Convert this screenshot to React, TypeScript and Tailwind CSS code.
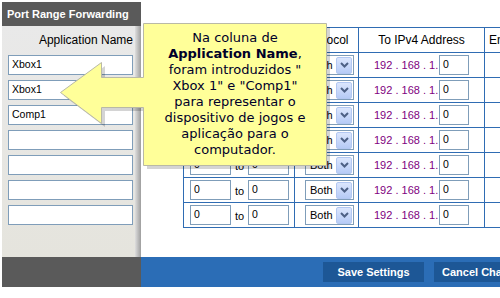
import React from "react";

function Field({ value, w }: { value: string; w: string }) {
  return (
    <div
      className={`${w} h-[20px] shrink-0 border border-[#7f9db9] bg-white flex items-center pl-[3px] pb-[1px] text-[10.5px] text-black`}
    >
      {value}
    </div>
  );
}

function Select() {
  return (
    <div className="w-[49px] h-[20px] shrink-0 border border-[#7f9db9] bg-white flex items-center justify-between">
      <span className="pl-[4px] text-[11px] text-black">Both</span>
      <div className="w-[16px] h-[17px] mr-[1px] rounded-[2px] border border-[#b3c8f2] bg-linear-to-b from-[#dbe6fd] to-[#b6cbf6] flex items-center justify-center">
        <svg width="9" height="6" viewBox="0 0 9 6">
          <path d="M1 1 L4.5 4.5 L8 1" fill="none" stroke="#4d6185" strokeWidth="2" />
        </svg>
      </div>
    </div>
  );
}

export default function App() {
  const sideValues = ["Xbox1", "Xbox1", "Comp1", "", "", "", ""];
  const rows = [0, 1, 2, 3, 4, 5, 6];
  return (
    <div className="relative w-[500px] h-[298px] overflow-hidden bg-white flex flex-col font-['Liberation_Sans',Arial,sans-serif]">
      <div className="flex h-[257px]">
        <aside className="ml-[2px] mt-[2px] w-[139px] shrink-0 flex flex-col">
          <div className="h-[24px] bg-[#5a5a5a] text-white font-bold text-[11px] leading-[24px] pl-[5px] whitespace-nowrap">
            Port Range Forwarding
          </div>
          <div className="flex-1 flex bg-linear-to-b from-[#e9e9e9] to-[#e5e4dd]">
            <div className="flex-1 flex flex-col pl-[6px] pr-[2px] pt-[6px]">
              <div className="h-[16px] leading-[16px] text-[12px] text-right text-black whitespace-nowrap">
                Application Name
              </div>
              <div className="mt-[7px] flex flex-col gap-[5px]">
                {sideValues.map((v, i) => (
                  <Field key={i} value={v} w="w-full" />
                ))}
              </div>
            </div>
            <div className="w-[6px] bg-linear-to-r from-[#dedede] to-[#9e9e9e]" />
          </div>
        </aside>
        <main className="flex-1 min-w-0 overflow-hidden pt-[27px] pl-[42px]">
          <div className="w-max border-t border-l border-[#2f6cb3] text-black">
            <div className="flex h-[25px] border-b border-[#2f6cb3] text-[12px]">
              <div className="w-[111px] border-r border-[#2f6cb3] flex items-center justify-center whitespace-nowrap">
                Start ~ End Port
              </div>
              <div className="w-[64px] border-r border-[#2f6cb3] flex items-center justify-center">
                Protocol
              </div>
              <div className="w-[126px] border-r border-[#2f6cb3] flex items-center justify-center whitespace-nowrap">
                To IPv4 Address
              </div>
              <div className="w-[100px] border-r border-[#2f6cb3] flex items-center pl-[4px]">
                Enabled
              </div>
            </div>
            {rows.map((r) => (
              <div key={r} className="flex h-[25px] border-b border-[#2f6cb3]">
                <div className="w-[111px] border-r border-[#2f6cb3] flex items-center pl-[6px]">
                  <Field value="0" w="w-[41px]" />
                  <span className="w-[17px] text-center text-[11px] self-end pb-[3px]">to</span>
                  <Field value="0" w="w-[41px]" />
                </div>
                <div className="w-[64px] border-r border-[#2f6cb3] flex items-center pl-[10px]">
                  <Select />
                </div>
                <div className="w-[126px] border-r border-[#2f6cb3] flex items-center pl-[15px]">
                  <span className="w-[65px] text-[11px] text-[#800080] whitespace-nowrap">192 . 168 . 1.</span>
                  <Field value="0" w="w-[30px]" />
                </div>
                <div className="w-[100px] border-r border-[#2f6cb3]" />
              </div>
            ))}
          </div>
        </main>
      </div>
      <div className="flex h-[30px]">
        <div className="ml-[2px] w-[139px] shrink-0 bg-[#5a5a5a]" />
        <div className="flex-1 min-w-0 overflow-hidden bg-[#2b6db6] flex items-center pl-[182px] gap-[10px]">
          <div className="w-[101px] h-[20px] shrink-0 bg-[#1d5796] text-white font-bold text-[11px] flex items-center justify-center whitespace-nowrap">
            Save Settings
          </div>
          <div className="w-[110px] h-[20px] shrink-0 bg-[#1d5796] text-white font-bold text-[11px] flex items-center pl-[8px] whitespace-nowrap">
            Cancel Changes
          </div>
        </div>
      </div>

      {/* Callout overlay */}
      <svg className="absolute left-0 top-0 pointer-events-none" width="500" height="298" viewBox="0 0 500 298">
        <polygon
          points="147,27 330,27 330,169 147,169 147,111 105,111 105,127 64,96 105,66 105,81 147,81"
          fill="rgba(0,0,0,0.17)"
        />
        <polygon
          points="143.5,23.5 326.5,23.5 326.5,165.5 143.5,165.5 143.5,107.5 101.5,107.5 101.5,123.5 60.5,92.5 101.5,62.5 101.5,77.5 143.5,77.5"
          fill="#ffff99"
          stroke="#b9b9a6"
          strokeWidth="1"
        />
      </svg>
      <div className="absolute left-[144px] top-[24px] w-[182px] pt-[6px] text-center text-[13px] leading-[16px] text-[#00002a] whitespace-nowrap font-['DejaVu_Sans',Verdana,sans-serif]">
        Na coluna de
        <br />
        <b>Application Name</b>,
        <br />
        foram introduzidos "
        <br />
        Xbox 1" e "Comp1"
        <br />
        para representar o
        <br />
        dispositivo de jogos e
        <br />
        aplicação para o
        <br />
        computador.
      </div>
    </div>
  );
}
